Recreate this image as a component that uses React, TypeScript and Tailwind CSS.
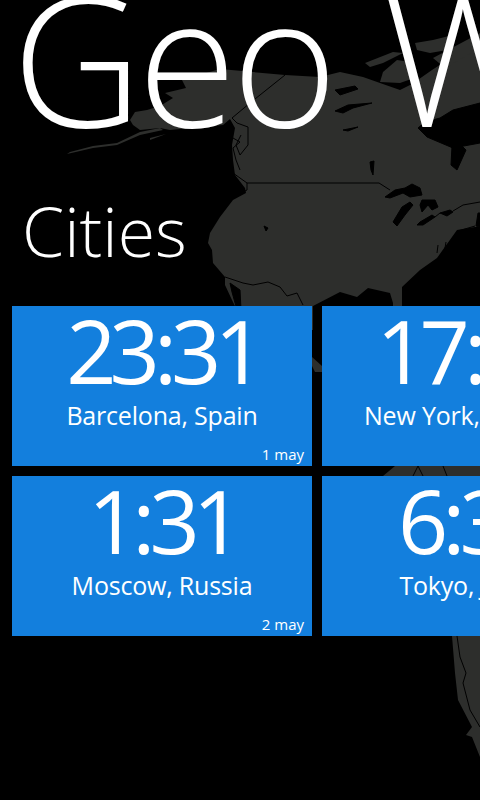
const cities = [
  { hours: "23", minutes: "31", name: "Barcelona, Spain", date: "1 may" },
  { hours: "17", minutes: "31", name: "New York, America", date: "1 may" },
  { hours: "1", minutes: "31", name: "Moscow, Russia", date: "2 may" },
  { hours: "6", minutes: "31", name: "Tokyo, Japan", date: "2 may" },
]

const WorldMap = () => {
  return (
    <svg className="absolute left-0 top-0" width="480" height="800" viewBox="0 0 480 800">
      <g fill="#2d2e2c">
        <path d="M220 69 L285 75 L320 77 L340 72 L363 77 L380 83 L400 90 L412 84 L432 70 L460 52 L480 48 L480 227 L475 227 L457 230 L437 258 L420 270 L402 287 L402 306 L402 330 L393 330 L393 303 L390 293 L368 288 L357 297 L340 292 L313 306 L313 330 L237 330 L237 310 L232 300 L225 285 L225 277 L213 263 L212 250 L208 243 L210 233 L220 217 L233 200 L246 193 L245 188 L235 175 L233 160 L232 145 L235 128 L230 119 L223 125 L170 130 L160 128 L140 130 L133 125 L130 120 L135 112 L147 110 L160 106 L173 98 L165 93 L186 88 L182 80 Z" />
        <path d="M365 63 L393 52 L403 53 L383 63 L370 67 Z" />
        <path d="M383 72 L397 60 L410 62 L417 77 L400 83 L380 82 Z" />
        <path d="M415 43 L433 40 L453 35 L447 50 L430 53 L417 50 Z" />
        <path d="M433 58 L480 33 L480 48 L445 68 Z" />
        <path d="M312 357 L322 366 L322 372 L315 372 L312 366 Z" />
        <path d="M395 466 L480 466 L480 757 L472 737 L466 735 L472 727 L458 700 L455 673 L452 636 L383 476 Z" />
        <path d="M163 130 L140 135 L117 145 L93 148 L67 154 L70 152 L93 146 L117 143 L140 132 L160 128 Z" />
        <path d="M150 138 L166 134 L150 140 Z" />
      </g>
      <g fill="#000" stroke="#000" strokeWidth="1" strokeLinejoin="round">
        <path d="M385 197 L395 190 L405 188 L412 184 L420 188 L422 195 L410 197 L403 193 L390 198 Z" />
        <path d="M393 222 L402 207 L410 202 L413 205 L405 215 L397 226 Z" />
        <path d="M422 200 L435 200 L438 207 L432 210 L428 205 L422 212 L420 205 Z" />
        <path d="M417 225 L420 222 L432 215 L435 217 L423 225 Z" />
        <path d="M440 213 L450 210 L453 212 L447 216 Z" />
        <path d="M335 90 L355 86 L358 89 L340 95 Z" />
        <path d="M335 111 L348 105 L372 103 L353 108 L343 113 Z" />
        <path d="M343 130 L358 127 L348 131 Z" />
        <path d="M370 162 L374 161 L373 175 L371 170 Z" />
        <path d="M418 128 L425 122 L440 118 L453 110 L480 103 L480 143 L453 148 L427 137 Z" />
        <path d="M452 146 L462 146 L466 150 L457 170 L451 165 Z" />
        <path d="M478 213 L480 213 L480 227 L476 226 Z" />
        <path d="M264 226 L268 228 L266 231 Z" />
        <path d="M230 283 L240 290 L241 310 L237 310 L232 292 Z" />
      </g>
      <g fill="none" stroke="#000" strokeWidth="1">
        <path d="M285 75 L250 103 L232 118 L237 123 L248 127 L248 145 L240 155 L236 145 L241 135" />
        <path d="M233 138 L240 142 L233 148 L236 160 L240 170" />
        <path d="M233 173 L247 183 L247 190 L243 192" />
        <path d="M247 183 L379 183 L390 190" />
        <path d="M225 277 L243 283 L253 285 L268 282 L280 287 L287 296 L297 293 L303 305" />
        <path d="M435 217 L440 213 M453 211 L463 205 L480 202" />
        <path d="M438 245 L437 253 M446 242 L445 248 M458 231 L475 226" />
        <path d="M413 476 L418 466 L423 476 M443 466 L447 476" />
        <path d="M457 636 L460 657 L466 673 L463 683 L470 710 L480 727" />
      </g>
    </svg>
  )
}

type CityTileProps = {
  hours: string
  minutes: string
  name: string
  date: string
}

const CityTile = ({ hours, minutes, name, date }: CityTileProps) => {
  return (
    <div className="relative flex h-40 w-[300px] shrink-0 flex-col items-center bg-[#137fdd] text-white">
      <p className="text-[88px] leading-[88px] tracking-[-7px]">
        {hours}
        <span className="mx-[1px]">:</span>
        {minutes}
      </p>
      <p className="mt-1 whitespace-nowrap text-[25px] leading-[34px] tracking-[-0.2px]">{name}</p>
      <p className="absolute bottom-[2px] right-2 text-[15px] leading-5">{date}</p>
    </div>
  )
}

const App = () => {
  return (
    <div className="relative h-[800px] w-[480px] overflow-hidden bg-black font-['Open_Sans',sans-serif] text-white">
      <WorldMap />
      <div className="relative flex flex-col">
        <h1 className="ml-3 mt-[-42px] whitespace-nowrap text-[180px] font-light leading-[200px] tracking-[-4.5px] [word-spacing:8px]">
          Geo Weather
        </h1>
        <h2 className="ml-[22px] mt-[38px] text-[68px] font-light leading-[70px]">Cities</h2>
        <div className="ml-3 mt-[40px] grid w-[610px] grid-cols-2 gap-[10px]">
          {cities.map((city) => (
            <CityTile key={city.name} {...city} />
          ))}
        </div>
      </div>
    </div>
  )
}

export default App
